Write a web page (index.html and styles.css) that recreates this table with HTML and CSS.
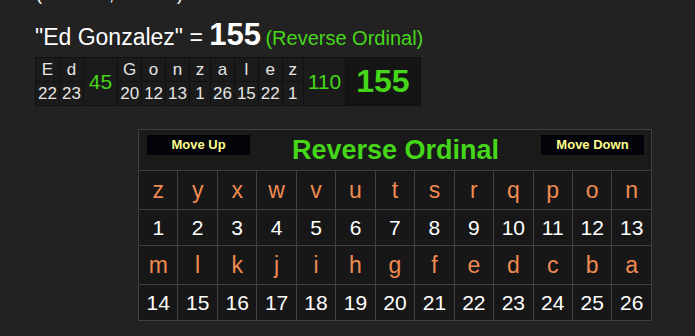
FILE: index.html
```html
<!DOCTYPE html>
<html>
<head>
<meta charset="utf-8">
<link rel="stylesheet" href="styles.css">
</head>
<body>
<div class="cut">(Reverse, Ordinal)</div>
<div class="title"><span class="phrase">"Ed Gonzalez" = </span><span class="total">155</span> <span class="cipher">(Reverse Ordinal)</span></div>
<table class="breakdown">
  <tr>
    <td class="lc">E</td><td class="lc">d</td><td class="wsum" rowspan="2">45</td>
    <td class="lc">G</td><td class="lc">o</td><td class="lc">n</td><td class="lc">z</td><td class="lc">a</td><td class="lc">l</td><td class="lc">e</td><td class="lc">z</td>
    <td class="wsum wide" rowspan="2">110</td><td class="grand" rowspan="2">155</td>
  </tr>
  <tr>
    <td class="lc">22</td><td class="lc">23</td>
    <td class="lc">20</td><td class="lc">12</td><td class="lc">13</td><td class="lc">1</td><td class="lc">26</td><td class="lc">15</td><td class="lc">22</td><td class="lc">1</td>
  </tr>
</table>
<table class="chart">
  <tr>
    <th colspan="13" class="head">
      <div class="headbar">
        <span class="btn">Move Up</span>
        <span class="ctitle">Reverse Ordinal</span>
        <span class="btn">Move Down</span>
      </div>
    </th>
  </tr>
  <tr class="letters"><td>z</td><td>y</td><td>x</td><td>w</td><td>v</td><td>u</td><td>t</td><td>s</td><td>r</td><td>q</td><td>p</td><td>o</td><td>n</td></tr>
  <tr class="nums"><td>1</td><td>2</td><td>3</td><td>4</td><td>5</td><td>6</td><td>7</td><td>8</td><td>9</td><td>10</td><td>11</td><td>12</td><td>13</td></tr>
  <tr class="letters"><td>m</td><td>l</td><td>k</td><td>j</td><td>i</td><td>h</td><td>g</td><td>f</td><td>e</td><td>d</td><td>c</td><td>b</td><td>a</td></tr>
  <tr class="nums"><td>14</td><td>15</td><td>16</td><td>17</td><td>18</td><td>19</td><td>20</td><td>21</td><td>22</td><td>23</td><td>24</td><td>25</td><td>26</td></tr>
</table>
</body>
</html>
```
FILE: styles.css
```css
html, body {
  margin: 0;
  padding: 0;
  background: #222222;
}
body {
  font-family: "Liberation Sans", Arial, sans-serif;
  color: #ffffff;
  overflow: hidden;
}
.cut {
  font-size: 18px;
  line-height: 18px;
  margin-top: -15px;
  padding-left: 36px;
  color: #ffffff;
}
.title {
  padding-left: 35px;
  margin-top: 16px;
  line-height: 32px;
  height: 32px;
  white-space: nowrap;
}
.phrase {
  font-size: 23px;
}
.total {
  font-size: 31px;
  font-weight: bold;
}
.cipher {
  font-size: 20px;
  color: #46d619;
}
.breakdown {
  margin-left: 35px;
  margin-top: 6px;
  border-collapse: collapse;
  background: #1b1b1b;
}
.breakdown td {
  border: 1px solid #111111;
  text-align: center;
  padding: 0 2px;
}
.breakdown .lc {
  font-size: 17px;
  line-height: 22px;
  height: 22px;
  padding-top: 1px;
  min-width: 16px;
  width: 16px;
  color: #e6e6e6;
}
.breakdown .wsum {
  font-size: 21px;
  color: #46d619;
  padding: 0 5px;
}
.breakdown .wsum.wide {
  padding: 0 4px;
}
.breakdown .grand {
  font-size: 32px;
  font-weight: bold;
  color: #46d619;
  background: #151515;
  padding: 0 10px;
}
.chart {
  margin-left: 138px;
  margin-top: 23px;
  border-collapse: collapse;
  width: 514px;
  table-layout: fixed;
  background: #171717;
}
.chart td, .chart th {
  border: 1px solid #404040;
  text-align: center;
  padding: 0;
}
.chart .head {
  background: #1a1a1a;
  height: 40px;
  vertical-align: top;
}
.headbar {
  display: flex;
  justify-content: space-between;
  align-items: flex-start;
  padding: 5px 7px 0 8px;
}
.btn {
  display: block;
  width: 103px;
  height: 20px;
  line-height: 20px;
  background: #03030a;
  color: #ffff8c;
  font-size: 13px;
  font-weight: bold;
}
.ctitle {
  font-size: 27px;
  font-weight: bold;
  color: #46d619;
  line-height: 31px;
}
.letters td {
  height: 38px;
  font-size: 23px;
  color: #ee8a52;
}
.nums td {
  height: 35px;
  font-size: 21px;
  color: #ffffff;
}
```
